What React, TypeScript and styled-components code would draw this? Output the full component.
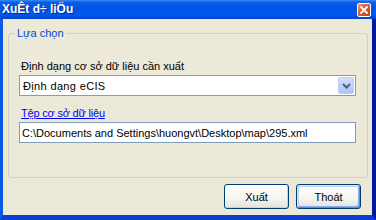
import React from 'react';
import styled, { createGlobalStyle } from 'styled-components';

const GlobalStyle = createGlobalStyle`
  html, body {
    margin: 0;
    padding: 0;
    background: #ece9d8;
  }
  * {
    box-sizing: border-box;
  }
`;

const uiFont = `'Liberation Sans', Arial, sans-serif`;

// Window chrome
const Window = styled.div`
  width: 376px;
  height: 220px;
  display: flex;
  flex-direction: column;
  font-family: ${uiFont};
  font-size: 11px;
  color: #000;
  overflow: hidden;
`;

const TitleBar = styled.div`
  height: 19px;
  flex: none;
  display: flex;
  align-items: center;
  justify-content: space-between;
  padding: 0 5px 0 2px;
  background: linear-gradient(
    to bottom,
    #3b8cf5 0%,
    #0a5de8 12%,
    #0054e3 40%,
    #0058ee 75%,
    #0044cf 100%
  );
`;

const Title = styled.span`
  color: #fff;
  font-weight: bold;
  font-size: 12px;
  line-height: 19px;
  text-shadow: 1px 1px 0 #0a1f8a;
  white-space: nowrap;
`;

const CloseButton = styled.div`
  width: 14px;
  height: 14px;
  margin-top: 1px;
  border: 1px solid #fff;
  border-radius: 2px;
  background: linear-gradient(135deg, #f09a7f 0%, #dd5a33 45%, #c2410f 100%);
  display: flex;
  align-items: center;
  justify-content: center;
`;

const Frame = styled.div`
  flex: 1;
  display: flex;
  flex-direction: column;
  background: #ece9d8;
  border-left: 3px solid #0b5ae6;
  border-right: 4px solid #0019a3;
  border-bottom: 5px solid #0b3fcf;
  padding: 8px 4px 0 5px;
`;

// Group box
const Group = styled.fieldset`
  margin: 0;
  width: 360px;
  border: 1px solid #d0d0bf;
  border-radius: 3px;
  padding: 0;
  min-width: 0;
`;

const Legend = styled.legend`
  margin-left: 6px;
  padding: 0 2px;
  color: #0046d5;
  font-size: 11px;
  line-height: 13px;
`;

const GroupBody = styled.div`
  padding: 20px 11px 34px 10px;
`;

const FieldLabel = styled.div`
  padding-left: 2px;
  line-height: 13px;
  white-space: nowrap;
`;

const LinkLabel = styled.a`
  display: inline-block;
  margin: 11px 0 0 2px;
  line-height: 13px;
  color: #0000ff;
  text-decoration: underline;
  letter-spacing: -0.2px;
  cursor: pointer;
`;

const Combo = styled.div`
  margin-top: 2px;
  height: 21px;
  width: 337px;
  border: 1px solid #7f9db9;
  background: #fff;
  display: flex;
  align-items: center;
  padding: 1px;
`;

const ComboText = styled.span`
  flex: 1;
  padding-left: 2px;
  letter-spacing: 0.35px;
  white-space: nowrap;
`;

const ComboArrow = styled.div`
  width: 16px;
  height: 17px;
  border: 1px solid #bccdf5;
  border-radius: 2px;
  background: linear-gradient(to bottom, #d4e0fb 0%, #bccffa 55%, #aec4f6 100%);
  display: flex;
  align-items: center;
  justify-content: center;
`;

const TextBox = styled.input`
  display: block;
  margin-top: 2px;
  height: 21px;
  width: 337px;
  border: 1px solid #7f9db9;
  background: #fff;
  padding: 0 2px;
  font-family: ${uiFont};
  font-size: 11px;
  color: #000;
  outline: none;
`;

// Buttons
const ButtonRow = styled.div`
  display: flex;
  justify-content: flex-end;
  gap: 7px;
  margin-top: 6px;
  padding-right: 7px;
`;

const XpButton = styled.button<{ $isDefault?: boolean }>`
  width: 65px;
  height: 25px;
  border: 1px solid #003c74;
  border-radius: 3px;
  background: linear-gradient(to bottom, #ffffff 0%, #f4f4f0 60%, #e3e2d9 100%);
  font-family: ${uiFont};
  font-size: 11px;
  color: #000;
  padding: 0;
  box-shadow: ${({ $isDefault }) =>
    $isDefault
      ? 'inset 1px 1px 0 #cee7ff, inset -1px -1px 0 #6982ee, inset 2px 2px 0 #bcd4f6, inset -2px -2px 0 #89adf4'
      : 'inset -1px -1px 0 #d6d0c5'};
`;

const CloseGlyph = () => (
  <svg width="8" height="8" viewBox="0 0 8 8">
    <path d="M1 1 L7 7 M7 1 L1 7" stroke="#fff" strokeWidth="1.8" strokeLinecap="square" />
  </svg>
);

const ChevronDown = () => (
  <svg width="9" height="6" viewBox="0 0 9 6">
    <path d="M1 1 L4.5 4.5 L8 1" stroke="#4d6185" strokeWidth="2" fill="none" />
  </svg>
);

const App = () => {
  return (
    <>
      <GlobalStyle />
      <Window>
        <TitleBar>
          <Title>XuÊt d÷ liÖu</Title>
          <CloseButton>
            <CloseGlyph />
          </CloseButton>
        </TitleBar>
        <Frame>
          <Group>
            <Legend>Lựa chọn</Legend>
            <GroupBody>
              <FieldLabel>Định dạng cơ sở dữ liệu cần xuất</FieldLabel>
              <Combo>
                <ComboText>Định dạng eCIS</ComboText>
                <ComboArrow>
                  <ChevronDown />
                </ComboArrow>
              </Combo>
              <LinkLabel>Tệp cơ sở dữ liệu</LinkLabel>
              <TextBox
                readOnly
                value="C:\Documents and Settings\huongvt\Desktop\map\295.xml"
              />
            </GroupBody>
          </Group>
          <ButtonRow>
            <XpButton>Xuất</XpButton>
            <XpButton $isDefault>Thoát</XpButton>
          </ButtonRow>
        </Frame>
      </Window>
    </>
  );
};

export default App;
